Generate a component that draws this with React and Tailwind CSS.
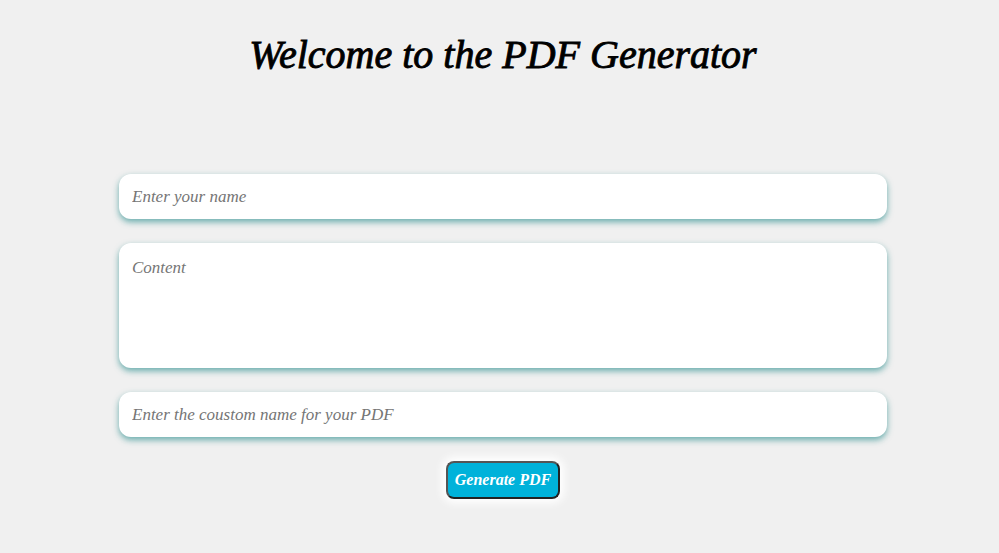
import React from 'react';

const App = () => {
  return (
    <div className="min-h-screen bg-[#f0f0f0] pl-[7px] font-['Liberation_Serif',serif] italic">
      <h1 className="pt-[29px] text-center text-[40px] leading-[52px] font-normal text-black [-webkit-text-stroke:0.9px_black]">
        Welcome to the PDF Generator
      </h1>

      <form className="mx-auto mt-[93px] flex w-[768px] flex-col gap-6" onSubmit={(e) => e.preventDefault()}>
        <input
          type="text"
          placeholder="Enter your name"
          className="h-[45px] w-full rounded-xl bg-white px-[13px] text-[17px] text-gray-800 outline-none placeholder:text-[#757575] shadow-[0_3px_6px_rgba(60,150,150,0.75)]"
        />
        <textarea
          placeholder="Content"
          className="h-[125px] w-full resize-none rounded-xl bg-white px-[13px] py-[12px] text-[17px] text-gray-800 outline-none placeholder:text-[#757575] shadow-[0_3px_6px_rgba(60,150,150,0.75)]"
        />
        <input
          type="text"
          placeholder="Enter the coustom name for your PDF"
          className="h-[45px] w-full rounded-xl bg-white px-[13px] text-[17px] text-gray-800 outline-none placeholder:text-[#757575] shadow-[0_3px_6px_rgba(60,150,150,0.75)]"
        />
        <div className="flex justify-center">
          <button
            type="submit"
            className="h-[38px] w-[114px] rounded-lg border-2 border-[#555] border-b-[#222] border-r-[#222] bg-[#00b2da] text-[16px] font-bold text-white shadow-[0_0_8px_4px_#ffffff]"
          >
            Generate PDF
          </button>
        </div>
      </form>
    </div>
  );
};

export default App;
